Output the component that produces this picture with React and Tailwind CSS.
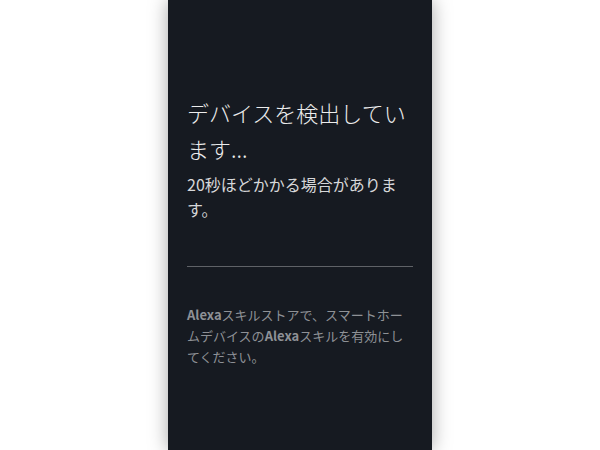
export default function App() {
  return (
    <div className="h-[450px] w-full bg-white flex justify-center overflow-hidden">
      <div
        className="w-[264px] h-full bg-[#161a21] px-[19px] pt-[94px] shadow-[0_0_18px_rgba(0,0,0,0.35)]"
        style={{ fontFamily: '"Noto Sans CJK JP", "Noto Sans", sans-serif' }}
      >
        <h1 className="text-[22px] leading-[36px] text-[#ececec] font-light">
          デバイスを検出しています...
        </h1>
        <p className="mt-[6px] text-[16px] leading-[25px] text-[#d6d7d9]">
          20秒ほどかかる場合があります。
        </p>
        <div className="mt-[44px] h-px bg-[#5f6267]" />
        <p className="mt-[37px] text-[13px] leading-[21px] text-[#8e9196]">
          <b>Alexa</b>スキルストアで、スマートホームデバイスの<b>Alexa</b>スキルを有効にしてください。
        </p>
      </div>
    </div>
  );
}
